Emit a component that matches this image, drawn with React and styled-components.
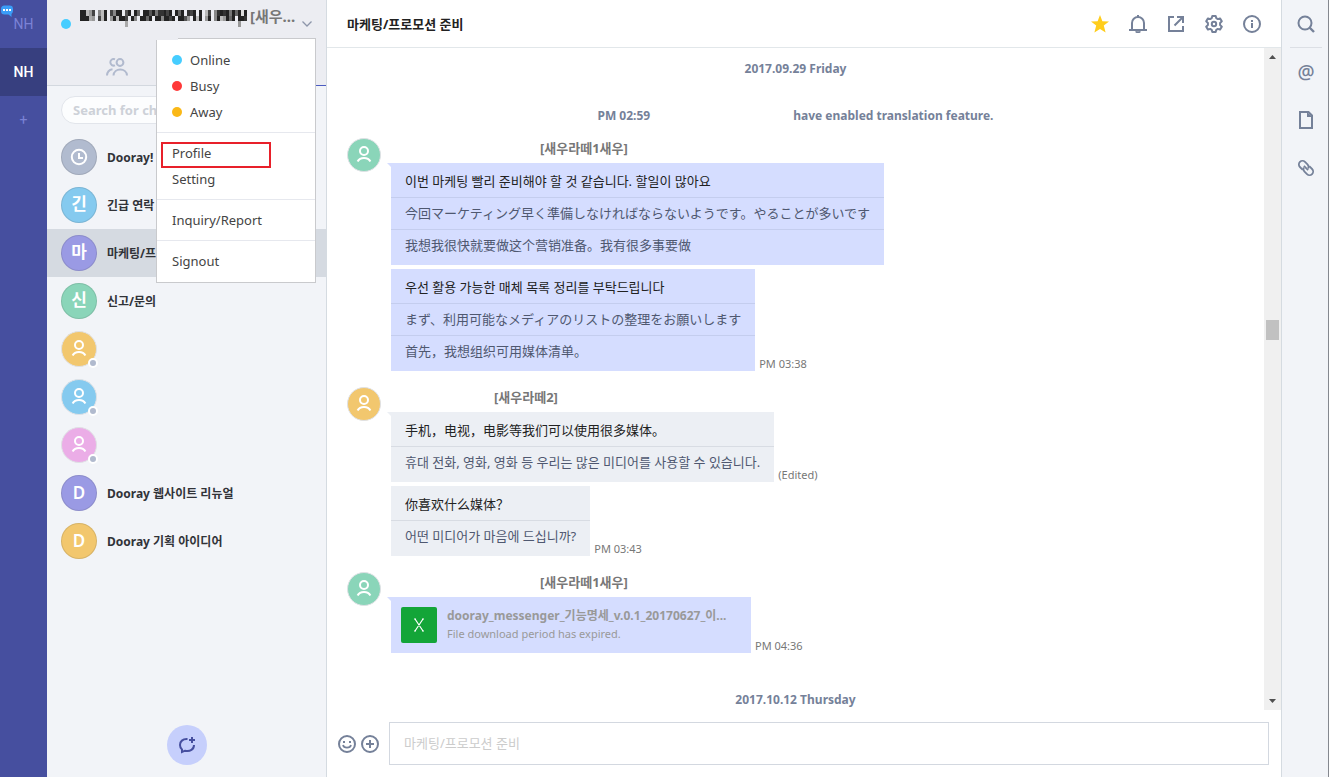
import React from 'react';
import styled, { createGlobalStyle } from 'styled-components'

const GlobalStyle = createGlobalStyle`
    * { box-sizing: border-box; }
    body {
        margin: 0;
        font-family: 'Noto Sans', 'Noto Sans CJK KR', sans-serif;
        font-size: 13px;
        color: #333;
    }
    button, input {
        font-family: inherit;
        font-size: inherit;
    }
    svg { display: block; }
    ul { list-style: none; margin: 0; padding: 0; }
`

const Page = styled.div`
    display: flex;
    height: 100vh;
    background: white;
    overflow: hidden;
`

// shared by every clickable thing without its own look
const plainButton = `
    display: flex;
    align-items: center;
    border: 0;
    padding: 0;
    background: transparent;
    color: inherit;
    cursor: pointer;
`

/* organisation rail */

const OrgRail = styled.nav`
    position: relative;
    width: 47px;
    flex: none;
    background: #464f9f;
`

const OrgButton = styled.button`
    ${plainButton}
    justify-content: center;
    width: 100%;
    height: 48px;
    font-family: Roboto, sans-serif;
    font-size: 14px;
    font-weight: ${props => props.$active ? 500 : 400};
    color: ${props => props.$active ? 'white' : '#7b82d6'};
    background: ${props => props.$active ? '#373f7f' : 'transparent'};
`

const NewMessageBadge = styled.svg`
    position: absolute;
    left: 1px;
    top: 5px;
`

/* sidebar */

const Sidebar = styled.aside`
    position: relative;
    display: flex;
    flex-direction: column;
    width: 280px;
    flex: none;
    background: #f2f4f8;
    border-right: 1px solid #d5dbe1;
`

const SidebarTop = styled.header`
    background: #ecedf2;
`

const Account = styled.button`
    ${plainButton}
    width: 100%;
    height: 48px;
    padding: 0 14px;
`

const Dot = styled.span`
    flex: none;
    width: 10px;
    height: 10px;
    border-radius: 50%;
    background: ${props => props.$color};
`

const AccountName = styled.span`
    display: flex;
    flex: 1;
    align-items: flex-start;
    gap: 3px;
    height: 36px;
    margin-left: 9px;
    font-size: 15px;
    line-height: 20px;
    font-weight: 700;
    color: #777;

    svg {
        margin-top: 4px;
    }
`

const Tabs = styled.div`
    display: flex;
    height: 38px;
`

const Tab = styled.button`
    ${plainButton}
    flex: 1;
    justify-content: center;
    color: #b1bace;
    border-bottom: 1px solid ${props => props.$active ? '#4b5bc0' : '#d3d8df'};
`

const Search = styled.input`
    margin: 10px 14px 9px;
    height: 28px;
    padding: 0 11px;
    border: 1px solid #e2e5eb;
    border-radius: 14px;
    background: #fcfdfe;
    font-weight: 700;

    &::placeholder {
        color: #cdd1d8;
        opacity: 1;
    }
`

const Channel = styled.button`
    ${plainButton}
    width: 100%;
    height: 48px;
    padding: 0 14px;
    gap: 10px;
    font-size: 12px;
    font-weight: 700;
    color: #313338;
    background: ${props => props.$active ? '#d5dae1' : 'transparent'};
`

const Avatar = styled.span`
    position: relative;
    display: flex;
    align-items: center;
    justify-content: center;
    flex: none;
    width: ${props => props.$size || 36}px;
    height: ${props => props.$size || 36}px;
    border-radius: 50%;
    border: 1px solid ${props => props.$person ? '#dfe1e5' : 'rgba(60, 60, 60, .14)'};
    background: ${props => props.$color};
    color: white;
    font-size: 17px;
    line-height: 20px;
    font-weight: 600;
`

const Letter = styled.span`
    padding-bottom: 2px;
`

const Presence = styled.span`
    position: absolute;
    right: -2px;
    bottom: -2px;
    width: 10px;
    height: 10px;
    border: 2px solid white;
    border-radius: 50%;
    background: #b1bace;
`

const NewChat = styled.button`
    ${plainButton}
    justify-content: center;
    width: 40px;
    height: 40px;
    margin: auto auto 12px;
    border-radius: 50%;
    color: #464f9f;
    background: #c6cffc;
`

const Menu = styled.div`
    position: absolute;
    z-index: 2;
    left: 109px;
    top: 38px;
    width: 160px;
    padding: 1px 0;
    background: white;
    border: 1px solid #c9cacd;

    &::before {
        content: '';
        position: absolute;
        left: -1px;
        top: -1px;
        width: 22px;
        height: 2px;
        background: #ecedf2;
    }
`

const MenuGroup = styled.ul`
    padding: 7px 0;

    & + & {
        border-top: 1px solid #e6e8ee;
    }
`

const MenuItem = styled.button`
    ${plainButton}
    position: relative;
    width: 100%;
    height: 26px;
    padding: 0 15px;
    gap: 8px;
    color: #444;
`

const Marker = styled.span`
    position: absolute;
    left: 4px;
    top: 2px;
    width: 110px;
    height: 26px;
    border: 2px solid #e8202a;
`

/* conversation */

const Main = styled.main`
    display: flex;
    flex-direction: column;
    flex: 1;
    min-width: 0;
`

const TitleBar = styled.header`
    display: flex;
    align-items: center;
    justify-content: space-between;
    flex: none;
    height: 48px;
    padding: 0 20px;
    border-bottom: 1px solid #e2e7ea;
`

const Title = styled.h1`
    margin: 0;
    font-size: 13px;
    font-weight: 700;
    color: #222;
`

const Tools = styled.div`
    display: flex;
    gap: 20px;
`

const IconButton = styled.button`
    ${plainButton}
    justify-content: center;
    color: ${props => props.$color || '#758199'};
`

const FeedArea = styled.div`
    display: flex;
    flex: 1;
    min-height: 0;
`

const Feed = styled.section`
    flex: 1;
    padding: 11px 20px 0;
    overflow: hidden;
`

const DateLine = styled.p`
    margin: 0;
    font-size: 12px;
    line-height: 20px;
    font-weight: 700;
    text-align: center;
    color: #758199;
`

const SystemLine = styled.p`
    display: flex;
    justify-content: center;
    gap: 143px;
    margin: 27px 0 0;
    font-size: 12px;
    line-height: 20px;
    font-weight: 700;
    color: #758199;
`

const Post = styled.article`
    display: flex;
    align-items: flex-start;
    gap: 10px;
    margin: ${props => props.$first ? 12 : 16}px 0 ${props => props.$last ? 37 : 0}px;
`

const PostBody = styled.div`
    display: flex;
    flex-direction: column;
    gap: 4px;
`

const Sender = styled.div`
    margin-bottom: -4px;
    padding-left: ${props => props.$indent}px;
    height: 25px;
    line-height: 20px;
    font-weight: 700;
    color: #777;
`

const Line = styled.div`
    display: flex;
    align-items: flex-end;
    gap: 4px;
`

const Bubble = styled.div`
    position: relative;
    padding: 3px 0 4px;
    background: ${props => props.$mine ? '#d5ddff' : '#eceff4'};

    &::before {
        content: '';
        display: ${props => props.$tail ? 'block' : 'none'};
        position: absolute;
        left: -4px;
        top: 0;
        border-top: 4px solid ${props => props.$mine ? '#d5ddff' : '#eceff4'};
        border-left: 4px solid transparent;
    }
`

const cjkFonts = {
    'ko': "'Noto Sans', 'Noto Sans CJK KR', sans-serif",
    'ja': "'Noto Sans', 'Noto Sans CJK JP', sans-serif",
    'zh-CN': "'Noto Sans', 'Noto Sans CJK SC', sans-serif",
}

const Phrase = styled.p`
    margin: 0;
    padding: 5px 14px;
    line-height: 21px;
    font-family: ${props => cjkFonts[props.lang]};
    color: ${props => props.$translated ? '#4f5870' : '#222'};
    border-top: ${props => props.$translated ? 1 : 0}px solid ${props => props.$mine ? '#c4cdee' : '#d8dce3'};
`

const Stamp = styled.span`
    font-size: 11px;
    line-height: 15px;
    color: #777;
`

const FileBubble = styled(Bubble)`
    display: flex;
    gap: 10px;
    width: 360px;
    padding: 10px;
`

const FileIcon = styled.span`
    display: flex;
    align-items: center;
    justify-content: center;
    width: 36px;
    height: 36px;
    border-radius: 2px;
    background: #13a538;
`

const FileName = styled.div`
    font-size: 12px;
    line-height: 18px;
    font-weight: 700;
    color: #999;
`

const FileNote = styled.div`
    font-size: 11px;
    line-height: 18px;
    color: #999;
`

const ScrollBar = styled.div`
    display: flex;
    flex-direction: column;
    align-items: center;
    flex: none;
    width: 17px;
    background: #f0f0f0;
`

const ScrollArrow = styled.svg`
    flex: none;
    width: 17px;
    height: 17px;
`

const ScrollGap = styled.div`
    flex: ${props => props.$share};
`

const ScrollThumb = styled.div`
    width: 13px;
    height: 20px;
    background: #c1c1c1;
`

const Composer = styled.form`
    display: flex;
    align-items: center;
    flex: none;
    gap: 5px;
    padding: 12px 12px 12px 11px;
`

const MessageInput = styled.input`
    flex: 1;
    min-width: 0;
    height: 43px;
    margin-left: 5px;
    padding: 0 14px 2px;
    border: 1px solid #d3d8e0;
    background: white;

    &::placeholder {
        color: #ccc;
        opacity: 1;
    }
`

const ToolRail = styled.nav`
    display: flex;
    flex-direction: column;
    align-items: center;
    flex: none;
    width: 48px;
    padding-left: 2px;
    background: #f2f4f8;
    border-left: 1px solid #d5dbe1;
    border-right: 1px solid #85888f;
`

const RailCell = styled(IconButton)`
    width: 32px;
    height: 48px;
    border-bottom: 1px solid ${props => props.$line ? '#dcdfe5' : 'transparent'};
`

const AtMark = styled.span`
    font-size: 19px;
    line-height: 20px;
    font-weight: 500;
`

/* icons */

const Svg = ({ size = 18, width = 2, children }) => (
    <svg width={size} height={size} viewBox="0 0 18 18" fill="none" stroke="currentColor" strokeWidth={width} aria-hidden="true">
        {children}
    </svg>
)

const StarIcon = () => (
    <Svg>
        <path d="M9 0l2.4 6.2 6.6.3-5.2 4.1 1.8 6.9L9 14l-5.6 3.5 1.8-6.9L0 6.5l6.6-.3z" fill="currentColor" stroke="none" />
    </Svg>
)

const BellIcon = () => (
    <Svg>
        <path d="M0 15h18M3 15V8a6 6 0 0 1 12 0v7" />
        <path d="M9 0v2.5M7 16.2c.4 1.3 3.6 1.3 4 0" />
    </Svg>
)

const OpenIcon = () => (
    <Svg>
        <path d="M7 2H2v14h14v-5M7.5 10.5L15 3M10 2h6v6" />
    </Svg>
)

const GearIcon = () => (
    <Svg>
        <path d="M7.3 1h3.4l.6 2.2 1.5.9 2.2-.7 1.8 2.9-1.7 1.6v2.2l1.7 1.6-1.8 2.9-2.2-.7-1.5.9-.6 2.2H7.3l-.6-2.2-1.5-.9-2.2.7-1.8-2.9 1.7-1.6V7.9L1.2 6.3 3 3.4l2.2.7 1.5-.9z" strokeLinejoin="round" />
        <circle cx="9" cy="9" r="2.2" />
    </Svg>
)

const InfoIcon = () => (
    <Svg>
        <circle cx="9" cy="9" r="8" />
        <path d="M9 8v5M9 5v2" />
    </Svg>
)

const SearchIcon = () => (
    <Svg>
        <circle cx="8" cy="8" r="6.5" />
        <path d="M12.5 12.5L17 17" strokeWidth="2.4" />
    </Svg>
)

const FileOutlineIcon = () => (
    <Svg>
        <path d="M3 1h8.5L15 4.5V17H3z" />
        <path d="M10 1v5h5.5z" fill="currentColor" stroke="none" />
    </Svg>
)

const LinkIcon = () => (
    <Svg width={1.8}>
        <g transform="rotate(45 9 9)">
            <path d="M8 12.6H4a3.6 3.6 0 0 1 0-7.2h3.500a3.600 3.600 0 0 1 3.400 2.400" />
            <path d="M10 5.400H14a3.600 3.600 0 0 1 0 7.200h-3.500a3.600 3.600 0 0 1-3.400-2.400" />
            <path d="M6 9h6" />
        </g>
    </Svg>
)

const SmileIcon = () => (
    <Svg>
        <circle cx="9" cy="9" r="8" />
        <path d="M5 10c.8 3.5 7.2 3.5 8 0" strokeWidth="1.7" />
        <path d="M5 7h2M11 7h2" />
    </Svg>
)

const PlusIcon = () => (
    <Svg>
        <circle cx="9" cy="9" r="8" />
        <path d="M9 5v8M5 9h8" />
    </Svg>
)

const PersonIcon = () => (
    <Svg>
        <circle cx="9" cy="5" r="4" />
        <path d="M2.600 15.500c2.400-4.700 10.400-4.700 12.800 0" />
    </Svg>
)

const ClockIcon = () => (
    <Svg>
        <circle cx="9" cy="9" r="7.2" />
        <path d="M9 5v5h4" />
    </Svg>
)

const PeopleIcon = () => (
    <svg width="22" height="18" viewBox="0 0 22 18" fill="none" stroke="currentColor" strokeWidth="2" aria-hidden="true">
        <circle cx="14" cy="4.5" r="3.4" />
        <path d="M7.500 17.500c.5-8 13-8 13.500 0M9 1.300a3.300 3.300 0 1 0 0 6M1 17.500c.2-3.500 2.400-5.700 5.500-6.200" />
    </svg>
)

const ChatPlusIcon = () => (
    <Svg>
        <path d="M9.500 3.100C4.500 2.800 2 5.500 2 9c0 2 .8 3.400 2 4.400v2.600l3-1.300c5.200 1 9-1.200 9-5.700" />
        <path d="M14 1v6M11 4h6" />
    </Svg>
)

const ChevronIcon = () => (
    <svg width="10" height="6" viewBox="0 0 10 6" fill="none" stroke="#8d96aa" strokeWidth="1.3" aria-hidden="true">
        <path d="M.5.5L5 5 9.5.5" />
    </svg>
)

const SpreadsheetIcon = () => (
    <svg width="12" height="14" viewBox="0 0 12 14" fill="none" stroke="white" strokeWidth="1.2" aria-hidden="true">
        <path d="M2 1l8 12M10 1L2 13M1 1h2M9 1h2M1 13h2M9 13h2" />
    </svg>
)

// hidden part of the account name, one hex grey per 3px cell
const mosaic = [
    '22b94e8b2e4822e52e26e2252733242e262e342e2eb4e832327262d2',
    '222a9e4b2e92b224e28e2262e2282242e2259e2b2e92e82b9262e223',
]

const Mosaic = () => (
    <svg width="167" height="17" viewBox="0 0 168 17" preserveAspectRatio="none" shapeRendering="crispEdges" aria-hidden="true">
        {mosaic.map((cells, row) => cells.split('').map((c, i) => (
            c !== 'e' && <rect key={row + '-' + i} x={i * 3} y={row * 6} width="3" height={row ? 5 : 6} fill={`#${c}${c}${c}`} />
        )))}
        <rect x="45" y="11" width="3" height="6" fill="#aaa" />
        <rect x="159" y="11" width="3" height="6" fill="#999" />
    </svg>
)

/* data */

const channels = [
    { name: 'Dooray!', color: '#b1bbcf', icon: <ClockIcon /> },
    { name: '긴급 연락', color: '#85caef', icon: <Letter>긴</Letter> },
    { name: '마케팅/프로모션 준비', color: '#9a9ae4', icon: <Letter>마</Letter>, active: true },
    { name: '신고/문의', color: '#8ad5b9', icon: <Letter>신</Letter> },
    { color: '#f2c76e', person: true, label: 'Contact 1' },
    { color: '#85caef', person: true, label: 'Contact 2' },
    { color: '#ebade7', person: true, label: 'Contact 3' },
    { name: 'Dooray 웹사이트 리뉴얼', color: '#9a9ae4', icon: 'D' },
    { name: 'Dooray 기획 아이디어', color: '#f2c76e', icon: 'D' },
]

const posts = [
    {
        sender: '[새우라떼1새우]', indent: 149, color: '#8ad5b9', mine: true,
        bubbles: [
            {
                phrases: [
                    ['ko', '이번 마케팅 빨리 준비해야 할 것 같습니다. 할일이 많아요'],
                    ['ja', '今回マーケティング早く準備しなければならないようです。やることが多いです'],
                    ['zh-CN', '我想我很快就要做这个营销准备。我有很多事要做'],
                ],
            },
            {
                phrases: [
                    ['ko', '우선 활용 가능한 매체 목록 정리를 부탁드립니다'],
                    ['ja', 'まず、利用可能なメディアのリストの整理をお願いします'],
                    ['zh-CN', '首先，我想组织可用媒体清单。'],
                ],
                stamp: 'PM 03:38',
            },
        ],
    },
    {
        sender: '[새우라떼2]', indent: 103, color: '#f2c76e',
        bubbles: [
            {
                phrases: [
                    ['zh-CN', '手机，电视，电影等我们可以使用很多媒体。'],
                    ['ko', '휴대 전화, 영화, 영화 등 우리는 많은 미디어를 사용할 수 있습니다.'],
                ],
                stamp: '(Edited)',
            },
            {
                phrases: [
                    ['zh-CN', '你喜欢什么媒体？'],
                    ['ko', '어떤 미디어가 마음에 드십니까?'],
                ],
                stamp: 'PM 03:43',
            },
        ],
    },
]

const StatusMenu = () => (
    <Menu>
        <MenuGroup>
            <li><MenuItem><Dot $color="#46cdff" />Online</MenuItem></li>
            <li><MenuItem><Dot $color="#ff3939" />Busy</MenuItem></li>
            <li><MenuItem><Dot $color="#fab817" />Away</MenuItem></li>
        </MenuGroup>
        <MenuGroup>
            <li><MenuItem>Profile<Marker /></MenuItem></li>
            <li><MenuItem>Setting</MenuItem></li>
        </MenuGroup>
        <MenuGroup>
            <li><MenuItem>Inquiry/Report</MenuItem></li>
        </MenuGroup>
        <MenuGroup>
            <li><MenuItem>Signout</MenuItem></li>
        </MenuGroup>
    </Menu>
)

const App = () => {
    return (
        <Page>
            <GlobalStyle />
            <OrgRail>
                <OrgButton>NH</OrgButton>
                <OrgButton $active>NH</OrgButton>
                <OrgButton aria-label="Add organisation">+</OrgButton>
                <NewMessageBadge width="12" height="12" viewBox="0 0 12 12" aria-hidden="true">
                    <path d="M3.500.5h5A3.500 3.500 0 0 1 12 4v2a3.500 3.500 0 0 1-1.500 2.900V12L7.500 9.500h-4A3.500 3.500 0 0 1 0 6V4A3.500 3.500 0 0 1 3.500.5z" fill="#3a9df8" />
                    <path d="M2 4h2v2H2zM5 4h2v2H5zM8 4h2v2H8z" fill="white" />
                </NewMessageBadge>
            </OrgRail>

            <Sidebar>
                <SidebarTop>
                    <Account>
                        <Dot $color="#46cdff" />
                        <AccountName>
                            <Mosaic />
                            [새우...
                        </AccountName>
                        <ChevronIcon />
                    </Account>
                    <Tabs>
                        <Tab aria-label="Members"><PeopleIcon /></Tab>
                        <Tab $active aria-label="Channels" />
                    </Tabs>
                </SidebarTop>
                <Search aria-label="Search for channels" placeholder="Search for channels" />
                <ul>
                    {channels.map((c, i) => (
                        <li key={i}>
                            <Channel $active={c.active} aria-label={c.label}>
                                <Avatar $color={c.color} $person={c.person}>
                                    {c.person ? <PersonIcon /> : c.icon}
                                    {c.person && <Presence />}
                                </Avatar>
                                {c.name}
                            </Channel>
                        </li>
                    ))}
                </ul>
                <NewChat aria-label="New chat"><ChatPlusIcon /></NewChat>
                <StatusMenu />
            </Sidebar>

            <Main>
                <TitleBar>
                    <Title>마케팅/프로모션 준비</Title>
                    <Tools>
                        <IconButton $color="#ffcd1c" aria-label="Favorite"><StarIcon /></IconButton>
                        <IconButton aria-label="Notifications"><BellIcon /></IconButton>
                        <IconButton aria-label="Open in new window"><OpenIcon /></IconButton>
                        <IconButton aria-label="Settings"><GearIcon /></IconButton>
                        <IconButton aria-label="Info"><InfoIcon /></IconButton>
                    </Tools>
                </TitleBar>
                <FeedArea>
                    <Feed>
                        <DateLine>2017.09.29 Friday</DateLine>
                        <SystemLine>
                            <span>PM 02:59</span>
                            <span>have enabled translation feature.</span>
                        </SystemLine>
                        {posts.map((post, i) => (
                            <Post key={i} $first={i === 0}>
                                <Avatar $size={34} $color={post.color} $person><PersonIcon /></Avatar>
                                <PostBody>
                                    <Sender $indent={post.indent}>{post.sender}</Sender>
                                    {post.bubbles.map((b, j) => (
                                        <Line key={j}>
                                            <Bubble $mine={post.mine} $tail={j === 0}>
                                                {b.phrases.map(([lang, text], k) => (
                                                    <Phrase key={lang} lang={lang} $mine={post.mine} $translated={k > 0}>{text}</Phrase>
                                                ))}
                                            </Bubble>
                                            {b.stamp && <Stamp>{b.stamp}</Stamp>}
                                        </Line>
                                    ))}
                                </PostBody>
                            </Post>
                        ))}
                        <Post $last>
                            <Avatar $size={34} $color="#8ad5b9" $person><PersonIcon /></Avatar>
                            <PostBody>
                                <Sender $indent={149}>[새우라떼1새우]</Sender>
                                <Line>
                                    <FileBubble $mine $tail>
                                        <FileIcon><SpreadsheetIcon /></FileIcon>
                                        <div>
                                            <FileName>dooray_messenger_기능명세_v.0.1_20170627_이...</FileName>
                                            <FileNote>File download period has expired.</FileNote>
                                        </div>
                                    </FileBubble>
                                    <Stamp>PM 04:36</Stamp>
                                </Line>
                            </PostBody>
                        </Post>
                        <DateLine>2017.10.12 Thursday</DateLine>
                    </Feed>
                    <ScrollBar>
                        <ScrollArrow viewBox="0 0 17 17"><path d="M5 11h7L8.5 7z" fill="#505050" /></ScrollArrow>
                        <ScrollGap $share={42} />
                        <ScrollThumb />
                        <ScrollGap $share={58} />
                        <ScrollArrow viewBox="0 0 17 17"><path d="M5 6h7l-3.5 4z" fill="#505050" /></ScrollArrow>
                    </ScrollBar>
                </FeedArea>
                <Composer onSubmit={e => e.preventDefault()}>
                    <IconButton type="button" aria-label="Emoji"><SmileIcon /></IconButton>
                    <IconButton type="button" aria-label="Attach"><PlusIcon /></IconButton>
                    <MessageInput aria-label="Message" placeholder="마케팅/프로모션 준비" />
                </Composer>
            </Main>

            <ToolRail>
                <RailCell $line aria-label="Search"><SearchIcon /></RailCell>
                <RailCell aria-label="Mentions"><AtMark>@</AtMark></RailCell>
                <RailCell aria-label="Files"><FileOutlineIcon /></RailCell>
                <RailCell aria-label="Links"><LinkIcon /></RailCell>
            </ToolRail>
        </Page>
    )
}

export default App;
